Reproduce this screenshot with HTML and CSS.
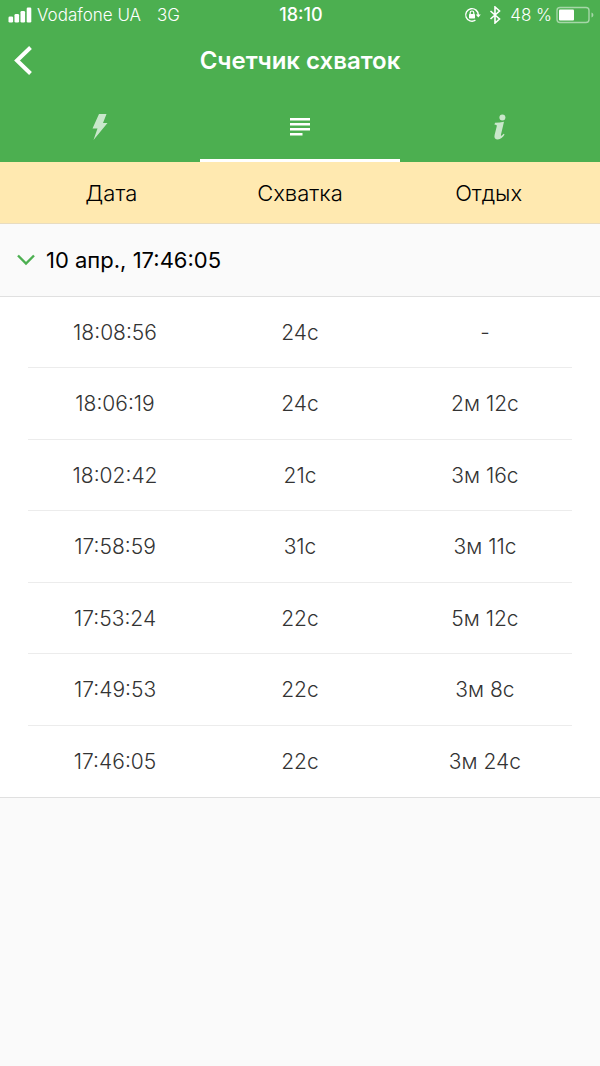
FILE: index.html
```html
<!DOCTYPE html>
<html lang="ru">
<head>
<meta charset="utf-8">
<meta name="viewport" content="width=device-width, initial-scale=1">
<title>Счетчик схваток</title>
<link rel="stylesheet" href="styles.css">
</head>
<body>
<header class="header">
  <div class="status">
    <div class="status-left">
      <svg class="signal" width="24" height="16" viewBox="0 0 24 16" aria-hidden="true"><rect x="0.500" y="9.500" width="4.600" height="6" rx="1.300"/><rect x="6.500" y="7" width="4.600" height="8.500" rx="1.300"/><rect x="12.500" y="4" width="4.600" height="11.500" rx="1.300"/><rect x="18.700" y="0.500" width="4.600" height="15" rx="1.300"/></svg>
      <span class="carrier">Vodafone UA</span>
      <span>3G</span>
    </div>
    <time class="clock">18:10</time>
    <div class="status-right">
      <svg width="18" height="16" viewBox="0 0 18 16" aria-hidden="true"><path d="M11.4 13.2A6.3 6.3 0 1 1 14.3 8" fill="none" stroke="currentColor" stroke-width="1.4"/><path d="M11.8 7.4h5l-2.500 3z"/><rect x="5" y="7" width="6" height="4.400" rx=".6"/><path d="M6.200 7.300V5.800a1.800 1.800 0 0 1 3.600 0v1.500" fill="none" stroke="currentColor" stroke-width="1.200"/></svg>
      <svg class="bluetooth" width="12" height="18" viewBox="0 0 12 18" aria-hidden="true"><path d="M1.500 5l9 8L6 17V1l4.500 4-9 8" fill="none" stroke="currentColor" stroke-width="1.600"/></svg>
      <span class="percent">48 %</span>
      <svg width="38" height="18" viewBox="0 0 38 18" aria-hidden="true"><g opacity=".5"><rect x="1" y="1.500" width="32" height="15" rx="3" fill="none" stroke="currentColor" stroke-width="1.400"/><path d="M35.500 6.500c2.500 1 2.500 4 0 5z"/></g><rect x="3" y="3.500" width="15" height="11" rx="1"/></svg>
    </div>
  </div>
  <div class="title-bar">
    <button class="back" type="button" aria-label="Назад"><svg width="22" height="32" viewBox="0 0 22 32" aria-hidden="true"><path d="M18.500 2.500L5 15.500 18.500 28.500" fill="none" stroke="currentColor" stroke-width="4"/></svg></button>
    <h1 class="title">Счетчик схваток</h1>
  </div>
  <nav class="tabs">
    <button class="tab" type="button" aria-label="Счетчик"><svg width="20" height="28" viewBox="0 0 20 28" aria-hidden="true"><path d="M9 1h7.500L13 10h4.500L3.500 27l4-11.500H2.500z"/></svg></button>
    <button class="tab tab-active" type="button" aria-label="История" aria-current="page"><svg width="20" height="18" viewBox="0 0 20 18" aria-hidden="true"><path d="M0 0h20v2.500H0zM0 5h20v2.500H0zM0 10h20v2.500H0zM0 15h12.500v2.500H0z"/></svg></button>
    <button class="tab" type="button" aria-label="Информация"><svg width="16" height="28" viewBox="0 0 16 28" aria-hidden="true"><circle cx="10.400" cy="4.500" r="3"/><path d="M3 9.700c3.200 0 6-.4 9-.9L9 21.400c-.3 1.300.1 1.500.8 1.100.6-.4 1.200-1 1.700-1.700l1.100.8c-1.800 3-4 4.800-6.800 4.800-2.700 0-3.900-1.700-3.200-4.500l2.100-8.500c.2-1-.1-1.500-1-1.600l-1.200-.1z"/></svg></button>
  </nav>
</header>
<main>
  <table class="log">
    <thead>
      <tr class="columns"><th scope="col">Дата</th><th scope="col">Схватка</th><th scope="col">Отдых</th></tr>
    </thead>
    <tbody>
      <tr class="group"><th colspan="3"><button class="group-toggle" type="button" aria-expanded="true"><svg width="20" height="12" viewBox="0 0 20 12" aria-hidden="true"><path d="M2 1.500l8 8 8-8" fill="none" stroke="currentColor" stroke-width="2.400"/></svg>10 апр., 17:46:05</button></th></tr>
    </tbody>
    <tbody class="entries">
      <tr><td>18:08:56</td><td>24с</td><td>-</td></tr>
      <tr><td>18:06:19</td><td>24с</td><td>2м 12с</td></tr>
      <tr><td>18:02:42</td><td>21с</td><td>3м 16с</td></tr>
      <tr><td>17:58:59</td><td>31с</td><td>3м 11с</td></tr>
      <tr><td>17:53:24</td><td>22с</td><td>5м 12с</td></tr>
      <tr><td>17:49:53</td><td>22с</td><td>3м 8с</td></tr>
      <tr><td>17:46:05</td><td>22с</td><td>3м 24с</td></tr>
    </tbody>
  </table>
</main>
</body>
</html>
```
FILE: styles.css
```css
* { box-sizing: border-box; }
body { margin: 0; background: #fafafa; color: #000; font-family: Inter, "Liberation Sans", sans-serif; }
button { margin: 0; padding: 0; border: 0; background: none; color: inherit; font: inherit; cursor: pointer; }
svg { display: block; flex: none; fill: currentColor; }
.header { background: #4caf50; color: #fff; }
.status { display: grid; grid-template-columns: 1fr auto 1fr; align-items: center; height: 30px; padding: 0 6px 0 8px; font-size: 17px; line-height: 24px; font-weight: 300; white-space: nowrap; }
.status-left, .status-right { display: flex; align-items: center; }
.status-right { justify-content: flex-end; }
.signal { margin-right: 5px; }
.carrier { margin-right: 16px; }
.clock { font-size: 18px; font-weight: 500; }
.bluetooth { margin: 0 9px 0 7px; }
.percent { margin-right: 4px; }
.title-bar { display: grid; grid-template-columns: 48px 1fr 48px; align-items: center; height: 62px; }
.back { padding-left: 12px; }
.title { margin: 0; font-size: 24px; line-height: 32px; font-weight: 600; text-align: center; }
.tabs { display: grid; grid-template-columns: repeat(3, 1fr); height: 70px; }
.tab { display: flex; align-items: center; justify-content: center; border-top: 3px solid transparent; border-bottom: 3px solid transparent; color: rgba(255, 255, 255, 0.7); }
.tab-active { border-bottom-color: #fff; color: #fff; }
.log, .log thead, .log tbody { display: block; }
.log tr { display: grid; }
.log th, .log td { padding: 0; text-align: center; }
.log .columns { grid-template-columns: repeat(3, 1fr); padding: 16px 17px 14px; background: #ffe9b0; border-bottom: 1px solid #e8dcc0; font-size: 22px; line-height: 31px; }
.columns th { font-weight: 300; }
.group { background: #fafafa; border-bottom: 1px solid #e0e0e0; }
.group-toggle { display: flex; align-items: center; gap: 10px; width: 100%; height: 72px; padding: 0 16px; font-size: 22px; line-height: 32px; font-weight: 400; }
.group-toggle svg { color: #4caf50; }
.log .entries { background: #fff; border-bottom: 1px solid #e0e0e0; color: #333; font-size: 21px; line-height: 30px; font-weight: 300; }
.entries tr { grid-template-columns: 8fr 9fr 8fr; margin: 0 28px; padding: 21px 0 19px; border-bottom: 1px solid #ececec; }
.entries tr:nth-child(even) { padding-bottom: 20px; }
.entries tr:last-child { padding-bottom: 20px; border-bottom: 0; }
```
